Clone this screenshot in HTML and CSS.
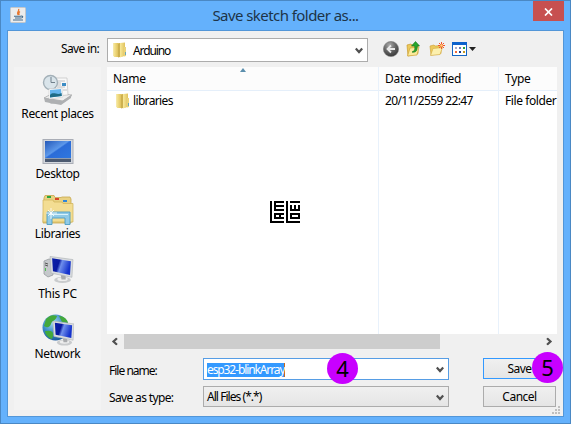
FILE: index.html
```html
<!DOCTYPE html>
<html lang="en">
<head>
<meta charset="utf-8">
<title>Save sketch folder as...</title>
<link rel="stylesheet" href="styles.css">
</head>
<body>
<svg width="0" height="0" class="defs">
  <defs>
    <linearGradient id="gold" x1="0" x2="1"><stop offset="0" stop-color="#f8e99a"/><stop offset="1" stop-color="#e0c25c"/></linearGradient>
    <linearGradient id="blue" x1="0" y1="0" x2="1" y2="1"><stop offset="0" stop-color="#2458b8"/><stop offset=".45" stop-color="#5c98ea"/><stop offset=".5" stop-color="#2b6cd8"/><stop offset="1" stop-color="#2f78e0"/></linearGradient>
    <linearGradient id="screen" x1="0" x2="1" y2=".3"><stop offset="0" stop-color="#0a1fa8"/><stop offset=".4" stop-color="#0818a0"/><stop offset=".55" stop-color="#6f8fec"/><stop offset="1" stop-color="#1432cc"/></linearGradient>
    <radialGradient id="globe" cx=".4" cy=".3" r=".8"><stop offset="0" stop-color="#a8dcf4"/><stop offset=".5" stop-color="#3b8cc8"/><stop offset="1" stop-color="#124c90"/></radialGradient>
    <radialGradient id="orb" cx=".4" cy=".25" r=".8"><stop offset="0" stop-color="#aaa"/><stop offset=".5" stop-color="#666"/><stop offset="1" stop-color="#333"/></radialGradient>
    <symbol id="folder" viewBox="0 0 14 16">
      <path d="M.5 1h11v13L7 15H2L.5 14z" fill="#e6cc6c"/>
      <path d="M.5 1H5v14H2L.5 14z" fill="url(#gold)"/>
      <path d="M5 2l2-1v14l-2 .5z" fill="#cdb04e"/>
      <path d="M7 1l5-.5v13L7 15.500z" fill="url(#gold)"/>
      <path d="M11 5h2v9l-2 .5z" fill="#ead37a"/><path d="M12 10h1v3h-1z" fill="#6aa5b5"/>
    </symbol>
    <symbol id="chev" viewBox="0 0 8 7"><path d="M.8 1.500L4 5 7.200 1.500" fill="none" stroke="#505050" stroke-width="2.200"/></symbol>
    <symbol id="monitor" viewBox="0 0 24 26">
      <ellipse cx="13" cy="22.500" rx="8" ry="3" fill="#c9cbcd"/><ellipse cx="13" cy="21.800" rx="5" ry="1.800" fill="#eee"/>
      <path d="M11 16l5 1v5h-4z" fill="#a9abae"/>
      <path d="M1 0l22 3-1 17L2 16z" fill="#d9dcdf" stroke="#aeb2b6" stroke-width=".6"/>
      <path d="M3 1.800l18 2.700-.8 13.200L3.800 14.300z" fill="url(#screen)"/>
    </symbol>
  </defs>
</svg>
<div class="window">
  <header class="titlebar">
    <svg class="java" viewBox="0 0 16 16"><rect x=".5" y=".5" width="15" height="15" rx="1" fill="#ececec" stroke="#c3c7cb"/><path d="M8.500 2C10 4 6 5 8 8M10 4.500C8 5.500 8.500 6.500 9.200 8" fill="none" stroke="#e8762c" stroke-width="1.300"/><path d="M4 9.200h7M5 11h6M3 13h10M11 9c2.500 0 2 2 0 2" fill="none" stroke="#426b8c" stroke-width="1.100"/></svg>
    <h1>Save sketch folder as...</h1>
    <button class="close"><svg viewBox="0 0 9 8"><path d="M1 .5l7 7M8 .5l-7 7" stroke="#fff" stroke-width="1.700"/></svg></button>
  </header>
  <main class="client">
    <div class="toprow">
      <label class="ui savein">Save in:</label>
      <div class="combo location"><svg class="folder"><use href="#folder"/></svg><span class="tight arduino">Arduino</span><svg class="chev"><use href="#chev"/></svg></div>
      <div class="tools">
        <svg width="16" height="16" viewBox="0 0 16 16"><circle cx="8" cy="8" r="7.600" fill="url(#orb)" stroke="#777" stroke-width=".6"/><path d="M12 8H5M8 4.500L4.500 8 8 11.500" fill="none" stroke="#e8e8e8" stroke-width="1.800"/></svg>
        <svg width="16" height="16" viewBox="0 0 16 16"><path d="M1 4l4-1 1 1 6-.5v9L2 15z" fill="#ecc95a" stroke="#c89a2c" stroke-width=".7"/><path d="M1.500 15L4 7l9-1-2 8z" fill="#fbeb9c" stroke="#d0a53a" stroke-width=".7"/><path d="M6 11c3-1 3-3 2.700-6H5.500l4-4.500L13.500 5h-2.300c.3 4-1 7-5.200 6z" fill="#27a62c" stroke="#14711a" stroke-width=".6"/></svg>
        <svg width="16" height="16" viewBox="0 0 16 16"><path d="M1 5l4-1 1 1 6-.5v8L2 14z" fill="#ecc95a" stroke="#d1a642" stroke-width=".7"/><path d="M1.500 14.500L4 7.500l9.500-1-2.500 7z" fill="#fcf0ae" stroke="#d7b04b" stroke-width=".7"/><path d="M12.500 1v7M9 4.500h7M10 2l5 5M15 2l-5 5" stroke="#f2552c" stroke-width="1"/><circle cx="12.500" cy="4.500" r="1.300" fill="#ffd27a"/></svg>
        <svg class="views" width="24" height="14" viewBox="0 0 24 14"><rect x=".5" y=".5" width="14" height="13" fill="#fff" stroke="#1466c4"/><path d="M0 0h15v3H0z" fill="#0c62cc"/><path d="M3 5h2v2H3z" fill="#a9aac8"/><path d="M7 5h2v2H7z" fill="#6b78b4"/><path d="M11 5h2v2h-2z" fill="#2aa03a"/><path d="M3 9h2v2H3z" fill="#f26c3a"/><path d="M7 9h2v2H7z" fill="#173c98"/><path d="M11 9h2v2h-2z" fill="#c79a20"/><path d="M17 5h7l-3.500 4z" fill="#222"/></svg>
      </div>
    </div>
    <nav class="places">
      <a><svg viewBox="0 0 32 32"><path d="M2 24l9-5 19 3-9 7-12 1z" fill="#c5c6c8"/><path d="M2 24l9-5 19 2-9 6z" fill="#eee" stroke="#999" stroke-width=".6"/><path d="M13 4h12l1 17-13 1z" fill="#f8f8f8" stroke="#bbb" stroke-width=".6"/><path d="M15 7h8M15 9h4M15 11h4M15 13h8M21 16h4" stroke="#b0b4b8" stroke-width=".8"/><path d="M20 9h4v3h-4z" fill="#3c8cc4"/><circle cx="8.500" cy="8.500" r="7" fill="#d9e4ea" stroke="#a3b0b8" stroke-width="1.400"/><path d="M9 3v5.500h4" fill="none" stroke="#70808c"/><path d="M7 15l13-1 1 9-14 2z" fill="#fff" stroke="#ccc" stroke-width=".6"/><path d="M8 16l11-1 .8 7L8 23.500z" fill="#65b5ee"/><path d="M8 21c4-4 7 1 11.500-2l.3 3L8 23.500z" fill="#1f6c86"/><path d="M2 24l1 4 16 3 10-7v-3l-9 6z" fill="#aeb0b2"/></svg><span>Recent places</span></a>
      <a><svg viewBox="0 0 32 32"><rect x="1" y="5.500" width="30" height="24" fill="#d4d8de" stroke="#a9adb6"/><path d="M3 7h26v18H3z" fill="url(#blue)"/><path d="M3 24h26v4H3z" fill="#4c5a70"/><path d="M3 24h26v1H3z" fill="#8f9db0"/></svg><span>Desktop</span></a>
      <a><svg viewBox="0 0 32 32"><path d="M2 4l1-2.500h9l1 2h6l1-.5h8l1 2v24H1z" fill="#e9d182" stroke="#c6a74c" stroke-width=".8"/><path d="M5 2h4v2H5z" fill="#2ba53c"/><path d="M13 4h4v2h-4z" fill="#d84426"/><path d="M21 6h4v2h-4z" fill="#2f86d8"/><path d="M1 6h10l1 2h8l1 1.500h10V28H1z" fill="#f3dd92" stroke="#d0b158" stroke-width=".7"/><path d="M5 30.500V18h23v12.500h-5V24H10v6.500z" fill="#91cae6" stroke="#4c9cc4" stroke-width=".9"/><path d="M7 20h19v1H7z" fill="#d9f3fc"/><path d="M9 14v11M4 19h11M6 16l6 6M12 16l-6 6" stroke="#fff" stroke-width=".8"/></svg><span>Libraries</span></a>
      <a><svg viewBox="0 0 32 32"><path d="M2 7l5-2 4 1v15l-5 2-4-3z" fill="#c5c8cb" stroke="#8e9296" stroke-width=".7"/><path d="M3 9l3 1M3 11l3 1" stroke="#555"/><path d="M3.500 14v3" stroke="#50c050"/><use href="#monitor" x="7" y="2" width="25" height="28"/></svg><span>This PC</span></a>
      <a><svg viewBox="0 0 32 32"><circle cx="13.500" cy="13.500" r="13" fill="url(#globe)"/><path d="M4 5c5-5 8-4 11-3-1 5-5 4-6 8-2 5-5 3-7 2zM17 2c6 0 9 5 9 7l-6-1zM5 17c7-1 7 4 5 8-4-1-7-5-7-8z" fill="#43a93b"/><use href="#monitor" x="10" y="7" width="23" height="25"/></svg><span>Network</span></a>
    </nav>
    <section class="list">
      <div class="col name"><div class="head">Name<svg class="sort" viewBox="0 0 6 4"><path d="M0 4l3-4 3 4z" fill="#5b8fad"/></svg></div><div class="cell"><svg class="folder"><use href="#folder"/></svg>libraries</div>
        <svg class="mark" viewBox="0 0 30 22" shape-rendering="crispEdges"><path d="M0 0h2v20h12v2H0zM16 0h2v20h12v2H16zM4 0h10v2H6v2h8v2H6v2h8v2H4zM4 12h10v2h-3v2h3v2H4zM6 14v2h3v-2zM20 0h10v2H20zM20 4h2v4h2V4h2v4h2V4h2v6H20zM20 12h10v6H20zM22 14v2h6v-2z" fill="#000" fill-rule="evenodd"/></svg>
      </div>
      <div class="col date"><div class="head">Date modified</div><div class="cell stamp">20/11/2559 22:47</div></div>
      <div class="col type"><div class="head">Type</div><div class="cell">File folder</div></div>
      <div class="scroll"><svg class="chev left"><use href="#chev"/></svg><div class="thumb"></div><svg class="chev right"><use href="#chev"/></svg></div>
    </section>
    <form class="form">
      <label class="fn">File name:</label>
      <div class="combo file"><span class="tight sel">esp32-blinkArray</span><svg class="chev"><use href="#chev"/></svg><b class="badge">4</b></div>
      <button type="button" class="btn save"><span>Save</span><b class="badge">5</b></button>
      <label class="ui st">Save as type:</label>
      <div class="combo kind"><span class="all">All Files (*.*)</span><svg class="chev"><use href="#chev"/></svg></div>
      <button type="button" class="btn"><span>Cancel</span></button>
    </form>
    <svg class="grip" viewBox="0 0 8 8"><path d="M6 0h2v2H6zM3 3h2v2H3zM6 3h2v2H6zM0 6h2v2H0zM3 6h2v2H3zM6 6h2v2H6z" fill="#bfbfbf"/></svg>
  </main>
</div>
</body>
</html>
```
FILE: styles.css
```css
* { box-sizing: border-box; }
body { margin: 0; font: 12px/16px "Noto Sans", "Open Sans", sans-serif; color: #000; overflow: hidden; }
svg { display: block; flex: none; }
.defs { position: absolute; }
.window { width: 571px; height: 424px; background: #64b1fc; border: 1px solid #4a88c4; padding: 0 7px 7px; }
.titlebar { height: 29px; display: flex; align-items: flex-start; }
.java { width: 16px; height: 16px; margin: 6px 0 0 2px; }
h1 { flex: 1; margin: 3px 0 0; padding-left: 12px; text-align: center; font-size: 15px; line-height: 22px; font-weight: 400; letter-spacing: -.56px; color: #1d3448; }
.close { width: 31px; height: 20px; margin-right: -1px; border: 0; padding: 0; background: #c75050; display: flex; align-items: center; justify-content: center; }
.close svg { width: 9px; height: 8px; margin-top: 2px; }
.client { position: relative; height: 387px; margin: 0 -1px; border: 1px solid #5296d8; background: #f0f0f0; display: grid; grid-template-columns: 99px 450px; grid-template-rows: 36px 283px 1fr; }
.ui { letter-spacing: -.64px; }
.tight { letter-spacing: -1.1px; }
.toprow { grid-column: 1 / 3; display: flex; }
.savein { width: 99px; padding: 10px 8px 0 0; text-align: right; }
.combo { position: relative; display: flex; align-items: center; border: 1px solid #acacac; background: #fff; padding-right: 4px; }
.combo .chev { margin-left: auto; margin-top: 1px; }
.chev { width: 8px; height: 7px; }
.location { width: 261px; height: 24px; margin-top: 7px; padding-left: 5px; }
.folder { width: 14px; height: 16px; }
.arduino { margin: 1px 0 0 6px; }
.tools { display: flex; gap: 7px; margin: 10px 0 0 15px; }
.views { margin-top: 1px; }
.places { grid-row: 2 / 4; margin-left: 6px; padding-top: 7px; width: 87px; background: #f3f3f3; height: 343px; }
.places a { display: flex; flex-direction: column; align-items: center; height: 60px; letter-spacing: -.36px; }
.places svg { width: 32px; height: 32px; }
.places span { white-space: nowrap; }
.list { width: 450px; height: 283px; background: #fff; display: grid; grid-template-columns: 272px 120px 58px; grid-template-rows: 267px 16px; letter-spacing: -.3px; }
.col { position: relative; border-right: 1px solid #e8f1fb; white-space: nowrap; }
.type { border: 0; }
.head { height: 24px; padding: 4px 0 0 6px; background: #fcfcfc; border-bottom: 1px solid #e5effa; }
.cell { display: flex; height: 20px; align-items: center; padding-left: 6px; }
.type .cell { letter-spacing: -.42px; }
.stamp { letter-spacing: -.62px; }
.name .cell { padding-left: 9px; letter-spacing: -.65px; }
.name .folder { margin-right: 3px; }
.sort { position: absolute; left: 133px; top: 1px; width: 6px; height: 4px; }
.mark { width: 30px; height: 22px; margin: 90px 0 0 163px; }
.scroll { grid-column: 1 / 4; background: #f0f0f0; display: flex; align-items: flex-start; }
.left { transform: rotate(90deg); margin: 4px 5px 0 4px; }
.thumb { width: 316px; height: 15px; background: #cdcdcd; }
.right { transform: rotate(-90deg); margin: 4px 4px 0 auto; }
.form { grid-column: 2; display: grid; grid-template-columns: 96px 246px 107px; grid-template-rows: 23px 21px; row-gap: 5px; padding-top: 8px; }
.form label { padding: 4px 0 0 2px; }
.form .fn { letter-spacing: -.98px; padding-top: 5px; }
.combo.file { height: 22px; border-color: #569de5; padding-left: 3px; }
.combo.kind { height: 21px; padding-left: 3px; background: linear-gradient(#f0f0f0, #e5e5e5); }
.sel { background: #3399ff; color: #fff; border-right: 1px solid #c86a20; line-height: 14px; margin-top: 1px; }
.all { letter-spacing: -.95px; margin-top: 1px; }
.btn { position: relative; width: 73px; height: 21px; margin-left: 34px; padding: 0; border: 1px solid #acacac; background: linear-gradient(#f0f0f0, #e5e5e5); color: #000; font: inherit; letter-spacing: -.5px; }
.save { border-color: #3399ff; }
.badge { position: absolute; width: 31px; height: 31px; border-radius: 50%; background: #c800ff; font: 22px/31px "Noto Sans", sans-serif; text-align: center; letter-spacing: 0; color: #000; }
.file .badge { left: 123px; top: -6px; }
.save .badge { left: 48px; top: -7px; }
.grip { position: absolute; right: 3px; bottom: 2px; width: 8px; height: 8px; }
```
